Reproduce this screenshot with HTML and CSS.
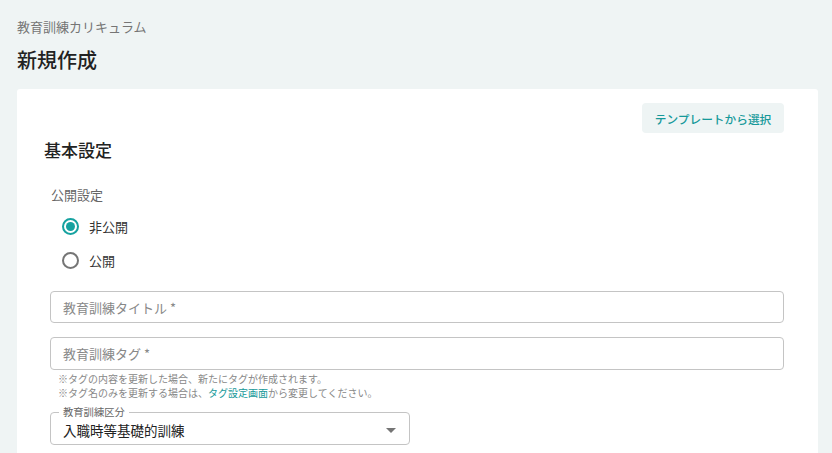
FILE: index.html
```html
<!DOCTYPE html>
<html lang="ja">
<head>
<meta charset="utf-8">
<link rel="stylesheet" href="styles.css">
</head>
<body>
<div class="page">
  <div class="breadcrumb">教育訓練カリキュラム</div>
  <h1 class="title">新規作成</h1>
  <div class="card">
    <div class="card-top">
      <button class="tpl-btn">テンプレートから選択</button>
    </div>
    <h2 class="section">基本設定</h2>
    <div class="form">
      <div class="field-label">公開設定</div>
      <div class="radios">
        <label class="radio checked"><span class="dot"></span><span class="rtext">非公開</span></label>
        <label class="radio"><span class="dot"></span><span class="rtext">公開</span></label>
      </div>
      <div class="input first"><span class="ph">教育訓練タイトル *</span></div>
      <div class="input second"><span class="ph">教育訓練タグ *</span></div>
      <div class="helper">
        <div>※タグの内容を更新した場合、新たにタグが作成されます。</div>
        <div>※タグ名のみを更新する場合は、<span class="link">タグ設定画面</span>から変更してください。</div>
      </div>
      <div class="select">
        <span class="legend">教育訓練区分</span>
        <span class="value">入職時等基礎的訓練</span>
        <svg class="arrow" width="10" height="5" viewBox="0 0 10 5"><path d="M0 0 L10 0 L5 5 Z" fill="#757575"/></svg>
      </div>
    </div>
  </div>
</div>
</body>
</html>
```

FILE: styles.css
```css
* { box-sizing: border-box; }
html, body {
  margin: 0;
  padding: 0;
  background: #eff4f4;
  font-family: "Noto Sans CJK JP", "Noto Sans", sans-serif;
  color: #333;
  overflow: hidden;
}
.page {
  padding: 17px 14px 0 17px;
  height: 453px;
  overflow: hidden;
}
.breadcrumb {
  font-size: 13px;
  line-height: 20px;
  color: #757575;
}
.title {
  margin: 8px 0 0 0;
  font-size: 20px;
  line-height: 30px;
  font-weight: 500;
  color: #222;
}
.card {
  margin-top: 14px;
  background: #fff;
  border-radius: 3px;
  padding: 14px 34px 0 27px;
  height: 380px;
}
.card-top {
  display: flex;
  justify-content: flex-end;
}
.tpl-btn {
  width: 142px;
  height: 30px;
  border: none;
  border-radius: 4px;
  background: #eef4f4;
  color: #16999a;
  font-family: inherit;
  font-size: 11.7px;
  font-weight: 500;
  padding: 0;
}
.section {
  margin: 4px 0 0 0;
  font-size: 17px;
  line-height: 26px;
  font-weight: 500;
  color: #222;
}
.form {
  padding-left: 6px;
}
.field-label {
  margin-top: 22px;
  padding-left: 1px;
  font-size: 13px;
  line-height: 20px;
  color: #666;
}
.radios {
  margin-top: 11px;
  display: flex;
  flex-direction: column;
  gap: 14px;
  padding-left: 12px;
}
.radio {
  display: flex;
  align-items: center;
  height: 20px;
}
.dot {
  width: 17px;
  height: 17px;
  border-radius: 50%;
  border: 2px solid #757575;
  display: flex;
  align-items: center;
  justify-content: center;
}
.radio.checked .dot {
  border-color: #16a2a0;
}
.radio.checked .dot::after {
  content: "";
  width: 9px;
  height: 9px;
  border-radius: 50%;
  background: #16a2a0;
}
.rtext {
  margin-left: 10px;
  font-size: 13px;
  color: #333;
}
.input {
  height: 32px;
  border: 1px solid #c4c4c4;
  border-radius: 4px;
  display: flex;
  align-items: center;
  padding-left: 12px;
}
.input.first { margin-top: 21px; }
.input.second { margin-top: 14px; height: 33px; }
.ph {
  font-size: 13px;
  color: #888;
}
.helper {
  margin-top: 2px;
  padding-left: 8px;
  font-size: 10px;
  line-height: 14px;
  color: #888;
}
.link { color: #16999a; }
.select {
  position: relative;
  margin-top: 12px;
  width: 360px;
  height: 33px;
  border: 1px solid #c4c4c4;
  border-radius: 4px;
  display: flex;
  align-items: center;
  padding-left: 12px;
}
.legend {
  position: absolute;
  top: -7px;
  left: 8px;
  padding: 0 4px;
  background: #fff;
  font-size: 10.3px;
  line-height: 12px;
  color: #666;
}
.value {
  margin-top: 3px;
  font-size: 13.5px;
  color: #222;
}
.arrow {
  position: absolute;
  right: 13px;
  top: 15px;
}
```
